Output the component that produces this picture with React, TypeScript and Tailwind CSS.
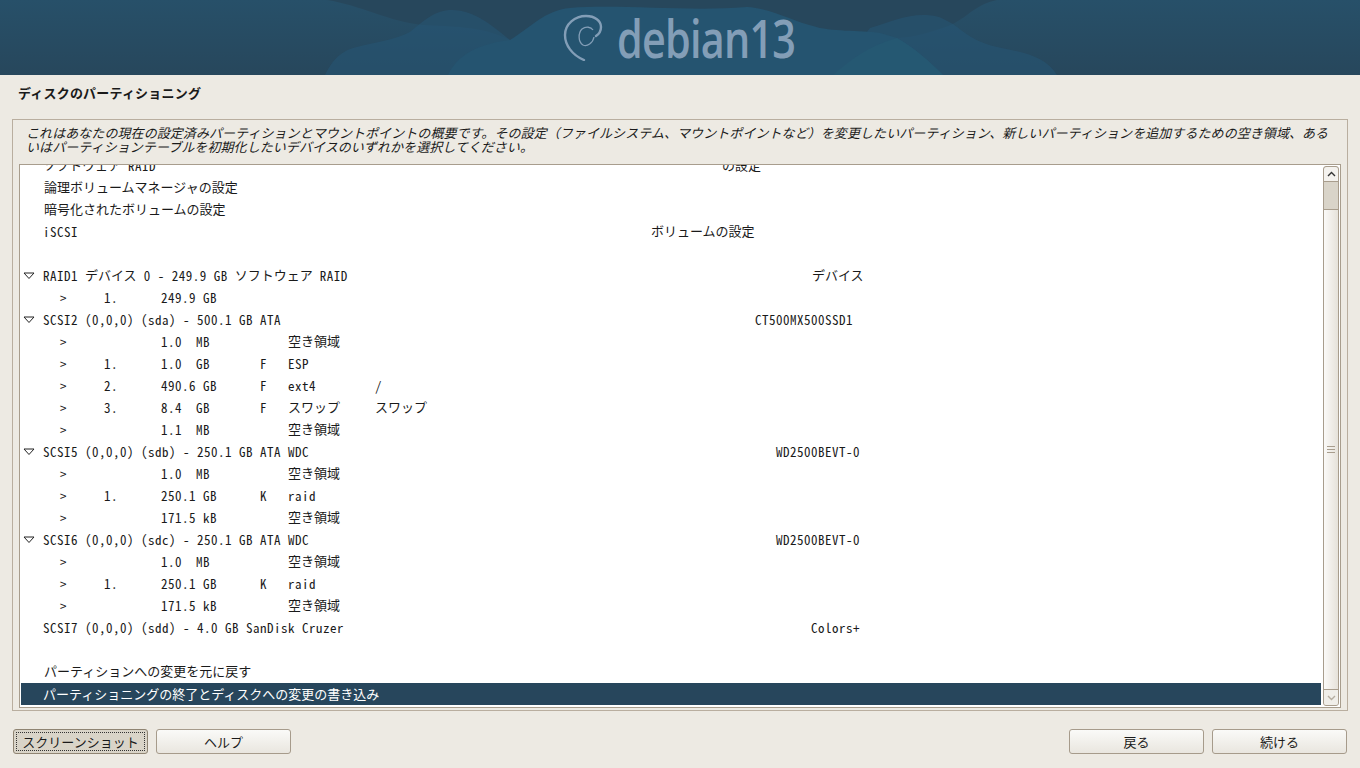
// latin runs are 7px per char, kana/kanji are 13px: split so both line up
function Mono({ text }: { text: string }) {
  const parts = text.split(/([\x20-\x7e]+)/).filter(Boolean)
  return (
    <>
      {parts.map((p, i) =>
        /^[\x20-\x7e]/.test(p) ? (
          <span key={i} className="tracking-[0.5px] [font-feature-settings:'hwid']">{p}</span>
        ) : (
          <span key={i} className="relative -top-[1px]">{p}</span>
        ),
      )}
    </>
  )
}

function Triangle() {
  return (
    <svg width="12" height="8" viewBox="0 0 12 8" className="absolute left-[2px] top-[7px]">
      <path d="M1 1 H11 L6 6.5 Z" fill="none" stroke="#222" strokeWidth="1" />
    </svg>
  )
}

function Device({ left, right, pad, open = true }: { left: string; right: string; pad: string; open?: boolean }) {
  return (
    <div className="relative flex h-[22px] items-center pl-[22px]">
      {open && <Triangle />}
      <span className={pad}><Mono text={left} /></span>
      <span><Mono text={right} /></span>
    </div>
  )
}

function Part({ num = '', size, flag = '', fs = '', mount = '' }: { num?: string; size: string; flag?: string; fs?: string; mount?: string }) {
  return (
    <div className="flex h-[22px] items-center">
      <span className="ml-[39px] w-[44px]"><Mono text=">" /></span>
      <span className="w-[57px]"><Mono text={num} /></span>
      <span className="w-[99px]"><Mono text={size} /></span>
      <span className="w-[28px]"><Mono text={flag} /></span>
      <span className="w-[87px]"><Mono text={fs} /></span>
      <span><Mono text={mount} /></span>
    </div>
  )
}

function Plain({ children }: { children?: string }) {
  return (
    <div className="flex h-[22px] items-center pl-[23px]">
      {children && <Mono text={children} />}
    </div>
  )
}

function Header() {
  return (
    <div className="relative h-[75px] overflow-hidden bg-[#27475c]">
      <svg width="1360" height="75" viewBox="0 0 1360 75" className="absolute inset-0">
        <defs>
          <linearGradient id="fade" x1="0" y1="0" x2="0" y2="1">
            <stop offset="0" stopColor="#275069" />
            <stop offset="1" stopColor="#27475c" />
          </linearGradient>
        </defs>
        <path d="M0 0 H327 C360 5 390 22 423 25 C450 27 480 25 510 40 L547 75 H0 Z" fill="url(#fade)" />
        <path d="M997 0 C975 5 970 15 953 24 C930 33 915 37 897 38 C870 45 850 60 833 75 H1360 V0 Z" fill="url(#fade)" />
        <path d="M325 75 C335 55 345 50 357 47 C375 42 395 40 410 32 C425 20 435 10 452 10 C475 10 495 28 510 40 L547 75 Z" fill="#26597a" fillOpacity="0.45" />
        <path d="M870 28 C890 22 905 15 923 15 C940 15 945 20 953 24 C965 33 975 42 997 47 C1020 52 1045 55 1057 75 H833 Z" fill="#26597a" fillOpacity="0.45" />
        <path d="M448 75 C455 60 470 45 510 40 C530 28 545 10 570 8 C620 4 690 12 747 7 C770 8 795 22 813 26 C830 32 860 30 880 33 L897 38 C915 48 930 62 943 75 Z" fill="#255470" />
        <path d="M833 75 C850 60 870 45 897 38 C915 48 930 62 943 75 Z" fill="#255872" />
      </svg>
      <div className="relative flex h-full items-center justify-center pr-[4px] text-[#839eb7]">
        <svg width="42" height="48" viewBox="0 0 42 48" className="mr-[13px] mt-[-1px]">
          <path
            d="M22 47 C10 42 3 32 3 22 C3 11 13 3 24 3 C33 3 39 8 39 14 C39 18 37 21 34 23"
            fill="none"
            stroke="currentColor"
            strokeWidth="2.4"
            strokeLinecap="round"
          />
          <path
            d="M32 24 C31 30 25 34 21 32 C16 29 16 20 20 16 C24 13 29 14 31 17"
            fill="none"
            stroke="currentColor"
            strokeWidth="1.3"
          />
        </svg>
        <span className="inline-block w-[177px] origin-left scale-x-[0.78] whitespace-nowrap font-['Open_Sans',sans-serif] text-[53px] font-semibold leading-none tracking-[-1px]">
          debian13
        </span>
      </div>
    </div>
  )
}

function Btn({ label, focused = false }: { label: string; focused?: boolean }) {
  if (focused) {
    return (
      <button className="h-[25px] w-[135px] rounded-[3px] border border-[#8f8472] bg-[#d9d4c8] p-[2px]">
        <span className="block h-full border border-dotted border-[#333] text-[13px] leading-[18px] text-[#1a1a1a]">{label}</span>
      </button>
    )
  }
  return (
    <button className="h-[25px] w-[135px] rounded-[3px] border border-[#a69b8b] bg-gradient-to-b from-[#fafaf8] to-[#e9e6df] text-[13px] leading-[22px] text-[#1a1a1a]">
      {label}
    </button>
  )
}

export default function App() {
  return (
    <div className="flex h-[768px] w-[1360px] flex-col overflow-hidden bg-[#edeae3] font-['Noto_Sans_CJK_JP','Liberation_Sans',sans-serif] text-[13px] text-[#1a1a1a]">
      <Header />

      <div className="flex h-[44px] items-center pb-[9px] pl-[18px] text-[13px] font-bold tracking-[0.2px]">ディスクのパーティショニング</div>

      <div className="mx-[12px] flex h-[592px] flex-col border border-[#b9ae9f]">
        <p className="h-[44px] pl-[13px] pr-[14px] pt-[6px] text-[13px] italic leading-[14px] tracking-[0.07px]">
          これはあなたの現在の設定済みパーティションとマウントポイントの概要です。その設定（ファイルシステム、マウントポイントなど）を変更したいパーティション、新しいパーティションを追加するための空き領域、あるいはパーティションテーブルを初期化したいデバイスのいずれかを選択してください。
        </p>

        <div className="mx-[6px] flex h-[544px] border border-[#a89d8d] bg-white">
          <div className="min-w-0 flex-1 overflow-hidden pl-[1px]">
            <div className="-mt-[10px] whitespace-pre leading-[22px]">
              <Device left="ソフトウェア RAID" right="の設定" pad="w-[679px]" open={false} />
              <Plain>論理ボリュームマネージャの設定</Plain>
              <Plain>暗号化されたボリュームの設定</Plain>
              <Device left="iSCSI" right="ボリュームの設定" pad="w-[608px]" open={false} />
              <Plain />
              <Device left="RAID1 デバイス 0 - 249.9 GB ソフトウェア RAID" right="デバイス" pad="w-[769px]" />
              <Part num="1." size="249.9 GB" />
              <Device left="SCSI2 (0,0,0) (sda) - 500.1 GB ATA" right="CT500MX500SSD1" pad="w-[712px]" />
              <Part size="1.0  MB" fs="空き領域" />
              <Part num="1." size="1.0  GB" flag="F" fs="ESP" />
              <Part num="2." size="490.6 GB" flag="F" fs="ext4" mount="/" />
              <Part num="3." size="8.4  GB" flag="F" fs="スワップ" mount="スワップ" />
              <Part size="1.1  MB" fs="空き領域" />
              <Device left="SCSI5 (0,0,0) (sdb) - 250.1 GB ATA WDC" right="WD2500BEVT-0" pad="w-[733px]" />
              <Part size="1.0  MB" fs="空き領域" />
              <Part num="1." size="250.1 GB" flag="K" fs="raid" />
              <Part size="171.5 kB" fs="空き領域" />
              <Device left="SCSI6 (0,0,0) (sdc) - 250.1 GB ATA WDC" right="WD2500BEVT-0" pad="w-[733px]" />
              <Part size="1.0  MB" fs="空き領域" />
              <Part num="1." size="250.1 GB" flag="K" fs="raid" />
              <Part size="171.5 kB" fs="空き領域" />
              <Device left="SCSI7 (0,0,0) (sdd) - 4.0 GB SanDisk Cruzer" right="Colors+" pad="w-[768px]" open={false} />
              <Plain />
              <Plain>パーティションへの変更を元に戻す</Plain>
              <div className="flex h-[22px] items-center bg-[#27465c] pl-[22px] text-white">パーティショニングの終了とディスクへの変更の書き込み</div>
            </div>
          </div>

          <div className="my-[1px] ml-[2px] mr-[1px] flex w-[16px] flex-col overflow-hidden rounded-[3px] border border-[#a89d8d] bg-[#d9d4c9]">
            <div className="flex h-[15px] items-center justify-center rounded-t-[3px] border-b border-[#a89d8d] bg-[#f4f2ee]">
              <svg width="9" height="6" viewBox="0 0 9 6"><path d="M1 5 L4.5 1.5 L8 5" fill="none" stroke="#333" strokeWidth="1.4" /></svg>
            </div>
            <div className="h-[27px]" />
            <div className="flex flex-1 flex-col items-center justify-center gap-[2px] border-y border-[#a89d8d] bg-gradient-to-r from-[#fbfaf8] to-[#e6e2da]">
              <i className="block h-[1px] w-[8px] bg-[#a89d8d]" />
              <i className="block h-[1px] w-[8px] bg-[#a89d8d]" />
              <i className="block h-[1px] w-[8px] bg-[#a89d8d]" />
            </div>
            <div className="flex h-[15px] items-center justify-center bg-[#f0eee9]">
              <svg width="9" height="6" viewBox="0 0 9 6"><path d="M1 1 L4.5 4.5 L8 1" fill="none" stroke="#b5ada0" strokeWidth="1.4" /></svg>
            </div>
          </div>
        </div>
      </div>

      <div className="mt-[18px] flex px-[13px]">
        <div className="flex gap-[8px]">
          <Btn label="スクリーンショット" focused />
          <Btn label="ヘルプ" />
        </div>
        <div className="ml-auto flex gap-[8px]">
          <Btn label="戻る" />
          <Btn label="続ける" />
        </div>
      </div>
    </div>
  )
}
